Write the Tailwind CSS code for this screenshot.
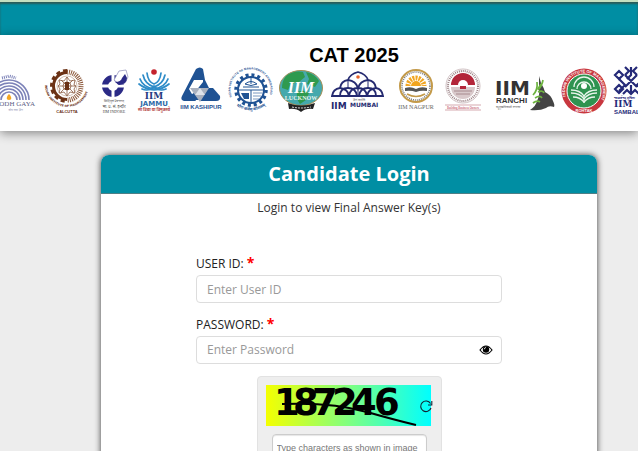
<!DOCTYPE html>
<html lang="en">
<head>
    <meta charset="UTF-8">
    <meta name="viewport" content="width=device-width, initial-scale=1.0">
    <title>CAT 2025 - Candidate Login</title>
    <script src="https://cdn.jsdelivr.net/npm/@tailwindcss/browser@4"></script>
</head>
<body class="h-screen overflow-hidden bg-[#ededed] font-['Open_Sans','Noto_Sans',sans-serif] text-xs text-[#333]">

    <!-- Top bar -->
    <div class="h-[35px] border-t-2 border-[#c4dfc0] bg-[#008ea3] shadow-[inset_0_2px_2px_#2c5c58]"></div>

    <!-- Banner with the institute logos -->
    <header class="overflow-hidden bg-white pt-2.5 pb-2.5 shadow-[0_2px_10px_rgba(0,0,0,0.45)]">
        <h1 class="pl-[70px] text-center font-['Liberation_Sans',Arial,sans-serif] text-[20px] leading-[20px] font-bold text-black">CAT 2025</h1>
        <div class="flex justify-center font-['Liberation_Sans',Arial,sans-serif]">

            <!-- IIM Bodh Gaya -->
            <svg class="h-[56px] w-[58px] shrink-0" viewBox="0 0 58 56" role="img" aria-label="IIM Bodh Gaya">
                <g fill="none" stroke="#7c82b8" stroke-width="1.6">
                    <path d="M7 35a20 20 0 0 1 40 0"/>
                    <path d="M10 35a17 17 0 0 1 34 0"/>
                    <path d="M13 35a14 14 0 0 1 28 0"/>
                    <path d="M16 35a11 11 0 0 1 22 0"/>
                    <path d="M19 35a8 8 0 0 1 16 0"/>
                    <path d="M20 13l7-2 7 2" stroke-dasharray="1 1" stroke-width="3"/>
                </g>
                <path d="M27 29c-3 3-3 6 0 6s3-3 0-6z" fill="#f5a623"/>
                <text x="53" y="41" text-anchor="end" font-size="7" fill="#5d5f86" font-family="Liberation Serif">BODH GAYA</text>
                <text x="41" y="46" text-anchor="end" font-size="3" fill="#8d8fb0" font-family="Noto Sans">बोध गया ज्ञान</text>
            </svg>

            <!-- IIM Calcutta -->
            <svg class="h-[56px] w-[54px] shrink-0" viewBox="0 0 54 56" role="img" aria-label="IIM Calcutta">
                <path id="calcutta" d="M5 20a22 22 0 0 0 44 0" fill="none"/>
                <path d="M27 7.500a13.500 13.500 0 0 0 0 27" fill="none" stroke="#6b3216" stroke-width="3"/>
                <path d="M27 5.500a15.500 15.500 0 0 0 0 31" fill="none" stroke="#6b3216" stroke-width="3" stroke-dasharray="4 3"/>
                <path d="M27 7a14 14 0 0 1 0 28" fill="none" stroke="#8d5a3c" stroke-width="5" stroke-dasharray="1 1"/>
                <circle cx="27" cy="21" r="10" fill="none" stroke="#b59680" stroke-width=".6"/>
                <g fill="none" stroke="#8a5a40" stroke-width=".8">
                    <circle cx="27" cy="21" r="4"/>
                    <path d="M27 12v18M18 21h18M21 15l12 12M33 15L21 27"/>
                    <path d="M27 12l3 4 5-1-1 5 2 1-2 3 1 4-5-1-3 4-3-4-5 1 1-4-2-3 2-2-1-4 5 1z"/>
                </g>
                <path d="M25 17h4v8h-4z" fill="#6b3216"/>
                <text font-size="3" font-weight="bold" fill="#6b3216" font-family="DejaVu Sans"><textPath href="#calcutta">INDIAN INSTITUTE OF MANAGEMENT</textPath></text>
                <text x="27" y="48" text-anchor="middle" font-size="4" font-weight="bold" fill="#6b3216">CALCUTTA</text>
            </svg>

            <!-- IIM Indore -->
            <svg class="h-[56px] w-[40px] shrink-0" viewBox="0 0 40 56" role="img" aria-label="IIM Indore">
                <circle cx="19" cy="21" r="8" fill="none" stroke="#2b2a86" stroke-width="6"/>
                <path d="M19 8v26M6 21h26" stroke="#fff" stroke-width="3"/>
                <path d="M20 15l5-9 7-1 2 7-3 6-6 1z" fill="#fff" stroke="#9a9ac0" stroke-width=".8"/>
                <path d="M21 17q6 0 7-4l3-4 2 4q0 6-8 7z" fill="#2b2a86"/>
                <text x="20" y="37" text-anchor="middle" font-size="3" fill="#444" font-family="Noto Sans">सिद्धिमूलं प्रबन्धनम्</text>
                <text x="20" y="43" text-anchor="middle" font-size="4" fill="#444" font-family="Noto Sans">भा. प्र. सं. इन्दौर</text>
                <text x="20" y="48" text-anchor="middle" font-size="4" fill="#444" font-family="Liberation Serif">IIM INDORE</text>
            </svg>

            <!-- IIM Jammu -->
            <svg class="h-[56px] w-[42px] shrink-0" viewBox="0 0 42 56" role="img" aria-label="IIM Jammu">
                <circle cx="20" cy="7" r="2.800" fill="#c4222c"/>
                <g fill="none" stroke="#2e8cc8" stroke-width="1.700" stroke-linecap="round">
                    <path d="M13 8q1 9 7 11q6-2 7-11"/>
                    <path d="M9 10q2 9 11 12q9-3 11-12"/>
                    <path d="M6 14q3 8 14 10q11-2 14-10"/>
                    <path d="M5 19q6 5 15 6q9-1 15-6"/>
                    <path d="M8 24q7 3 12-3q5 6 12 3"/>
                </g>
                <text x="20" y="34" text-anchor="middle" font-size="9" font-weight="bold" fill="#263a80" font-family="DejaVu Serif">IIM</text>
                <text x="20" y="41" text-anchor="middle" font-size="7" font-weight="bold" fill="#2d6aa8" font-family="DejaVu Sans">JAMMU</text>
                <text x="20" y="46" text-anchor="middle" font-size="4" font-weight="bold" fill="#b03a3a" font-family="Noto Sans">सा विद्या या विमुक्तये</text>
            </svg>

            <!-- IIM Kashipur -->
            <svg class="h-[56px] w-[49px] shrink-0" viewBox="0 0 49 56" role="img" aria-label="IIM Kashipur">
                <path d="M20 4q4-3 7 0v11h-9l-5 9 7 12H8q-4-1-2-5z" fill="#1f5293"/>
                <path d="M27 4l2 11 4 8-7 12H8l11-8 8-10z" fill="#1f5293"/>
                <path d="M28 23h9l7 8q1 5-4 5H24z" fill="#1f5293"/>
                <path d="M14 23h19l-9 14z" fill="#a9b1bf"/>
                <path d="M24 23l5 7H19z" fill="#dfe3ea"/>
                <text x="25" y="44" text-anchor="middle" font-size="6" font-weight="bold" fill="#1f5293">IIM KASHIPUR</text>
            </svg>

            <!-- IIM Ahmedabad -->
            <svg class="h-[56px] w-[50px] shrink-0" viewBox="0 0 50 56" role="img" aria-label="IIM Ahmedabad">
                <path id="gear-top" d="M7 32a20 20 0 1 1 37 0" fill="none"/>
                <path id="gear-bottom" d="M9 39q16 13 34 0" fill="none"/>
                <circle cx="26" cy="25" r="13" fill="none" stroke="#1f5293" stroke-width="2"/>
                <circle cx="26" cy="25" r="15" fill="none" stroke="#1f5293" stroke-width="3.500" stroke-dasharray="3 2.890"/>
                <path d="M13 25h26M26 25v14M20 19q6-5 12 0q-6 3-12 0M26 13v6M18 22h16" fill="none" stroke="#1f5293" stroke-width="1"/>
                <path d="M16 28h8v6h-5z" fill="#1f5293"/>
                <path d="M28 28h9M28 31h8M28 34h6" stroke="#7a98c0" stroke-width="1"/>
                <text font-size="3" font-weight="bold" fill="#1f5293"><textPath href="#gear-top">INDIAN INSTITUTE OF MANAGEMENT AHMEDABAD</textPath></text>
                <text font-size="4" font-weight="bold" fill="#1f5293" font-family="Noto Sans"><textPath href="#gear-bottom" startOffset="3">योगः कर्मसु कौशलम्</textPath></text>
            </svg>

            <!-- IIM Lucknow -->
            <svg class="h-[56px] w-[52px] shrink-0" viewBox="0 0 52 56" role="img" aria-label="IIM Lucknow">
                <ellipse cx="26" cy="23" rx="21.500" ry="17.500" fill="#45a9ad" stroke="#a58d52" stroke-width="1"/>
                <path d="M11 11q8-6 17-4l2 5-6 5-8 2-3 6-6-2q0-7 4-12zM31 7q9 2 13 9l-4 6-8-3 2-5zM22 27q7-3 12 1l-3 7-6 4q-4-5-3-12z" fill="#2f9a4e"/>
                <text x="26" y="28" text-anchor="middle" font-size="16" font-weight="bold" font-style="italic" fill="#fff" font-family="Liberation Serif">IIM</text>
                <text x="26" y="35" text-anchor="middle" font-size="6" font-weight="bold" fill="#e9f5ee" font-family="Liberation Serif">LUCKNOW</text>
                <path d="M13 38q13 5 27 0l-2 6q-7-1-12 3q-5-4-12-3z" fill="#222"/>
                <path d="M17 42q9 2 19 0" fill="none" stroke="#ddd" stroke-width="1" stroke-dasharray="2 1"/>
            </svg>

            <!-- IIM Mumbai -->
            <svg class="h-[56px] w-[64px] shrink-0" viewBox="0 0 64 56" role="img" aria-label="IIM Mumbai">
                <g fill="none" stroke="#252a70" stroke-width="1.800">
                    <path d="M5 31q1-7 8-8q1-7 8-8q2-6 10-8q8 2 10 8q7 1 8 8q6 1 7 8z"/>
                    <path d="M13 23q8 1 9 8q1-8 9-8q8 0 9 8q1-7 9-8"/>
                    <path d="M21 15q8 1 10 8q2-7 10-8M13 31q0-8 8-8q8 0 9 8M32 31q1-8 9-8q8 0 8 8"/>
                    <path d="M31 23v8M21 15v8M41 15v8" stroke-width="1"/>
                </g>
                <circle cx="31" cy="12" r="1.800" fill="#e8632c"/>
                <text x="32" y="36" text-anchor="middle" font-size="3" fill="#555" font-family="Noto Sans">ज्ञानं कर्मणि</text>
                <text x="4" y="44" font-size="9" font-weight="bold" fill="#252a70" font-family="DejaVu Sans">IIM</text>
                <text x="23" y="42" font-size="6" font-weight="bold" fill="#252a70" font-family="DejaVu Sans">MUMBAI</text>
            </svg>

            <!-- IIM Nagpur -->
            <svg class="h-[56px] w-[49px] shrink-0" viewBox="0 0 49 56" role="img" aria-label="IIM Nagpur">
                <circle cx="25" cy="21" r="16" fill="#fff" stroke="#c39a4a" stroke-width="2"/>
                <circle cx="25" cy="21" r="14" fill="none" stroke="#777" stroke-width="1.500" stroke-dasharray="1 1"/>
                <path d="M20 21a5 5 0 0 1 10 0z" fill="#f2a51f"/>
                <path d="M17 21a8 8 0 0 1 16 0" fill="none" stroke="#f2a51f" stroke-width="5" stroke-dasharray="2 1"/>
                <path d="M14 23q6-2 11 1q5-3 11-1v3q-6-1-11 1q-5-2-11-1z" fill="#555"/>
                <path d="M16 29q9 5 18 0" fill="none" stroke="#c39a4a" stroke-width="1.500"/>
                <text x="25" y="44" text-anchor="middle" font-size="6" fill="#666" font-family="Liberation Serif">IIM NAGPUR</text>
            </svg>

            <!-- IIM Raipur -->
            <svg class="h-[56px] w-[49px] shrink-0" viewBox="0 0 49 56" role="img" aria-label="IIM Raipur">
                <circle cx="23" cy="21" r="17" fill="none" stroke="#cfc0c2" stroke-width="1"/>
                <circle cx="23" cy="21" r="15" fill="none" stroke="#9a8084" stroke-width="2" stroke-dasharray="1 1"/>
                <path d="M11 20a12 12 0 0 1 24 0z" fill="#b3263a"/>
                <path d="M11 22a12 12 0 0 0 24 0z" fill="#d9c9cb"/>
                <path d="M18 20a5 5 0 0 1 10 0z" fill="#fff"/>
                <path d="M20 21h6v3h-6z" fill="#b3263a"/>
                <path d="M14 26h18M16 29h14" stroke="#a78a8e" stroke-width="1"/>
                <path d="M5 40h36M5 45h36" stroke="#b96f7b" stroke-width=".6"/>
                <text x="23" y="44" text-anchor="middle" font-size="3" fill="#b3263a" font-family="Liberation Serif">Building Business Owners</text>
            </svg>

            <!-- IIM Ranchi -->
            <svg class="h-[56px] w-[68px] shrink-0" viewBox="0 0 68 56" role="img" aria-label="IIM Ranchi">
                <text x="6" y="30" font-size="20" font-weight="bold" fill="#333" font-family="DejaVu Sans">IIM</text>
                <text x="7" y="38" font-size="8" font-weight="bold" fill="#333">RANCHI</text>
                <text x="7" y="43" font-size="3" fill="#555" font-family="Noto Sans">बहुमुखविकासो गन्तव्यः</text>
                <path d="M50 11l2 7q3 5 4 9q6 3 8 9q2 4 1 6q-5-2-8 1q-6 3-16 2q6-4 7-9q3-6 2-12z" fill="#444"/>
                <path d="M48 17q1 8-4 13M54 15q-1 6-5 10M52 19l-3 5M49 27q5-2 6 1M46 33q5-3 7 0M44 38q4-3 7-1" fill="none" stroke="#6db33f" stroke-width="1.700"/>
            </svg>

            <!-- IIM Rohtak -->
            <svg class="h-[56px] w-[53px] shrink-0" viewBox="0 0 53 56" role="img" aria-label="IIM Rohtak">
                <path id="rohtak-top" d="M10 35a19 19 0 1 1 34 0" fill="none"/>
                <circle cx="27" cy="26" r="22.500" fill="#c8373f"/>
                <circle cx="27" cy="26" r="17" fill="#2f9350" stroke="#fff" stroke-width="1"/>
                <g fill="none" stroke="#e9f5ec" stroke-width="1.300">
                    <path d="M17 22a10 10 0 0 1 20 0M20 24a7 7 0 0 1 14 0"/>
                    <path d="M14 25q9 0 13 6q4-6 13-6M14 28q9 0 13 6q4-6 13-6M16 32q7 0 11 5q4-5 11-5"/>
                    <path d="M27 31v7"/>
                </g>
                <circle cx="27" cy="21" r="3" fill="#fff"/>
                <text font-size="4" font-weight="bold" fill="#fff"><textPath href="#rohtak-top" startOffset="4">INDIAN INSTITUTE OF MANAGEMENT</textPath></text>
                <text x="27" y="47" text-anchor="middle" font-size="4" font-weight="bold" fill="#fff">ROHTAK</text>
            </svg>

            <!-- IIM Sambalpur -->
            <svg class="h-[56px] w-[46px] shrink-0" viewBox="0 0 46 56" role="img" aria-label="IIM Sambalpur">
                <g fill="none" stroke="#252a78" stroke-width="2.200">
                    <path d="M5 10l4-4 4 4-4 4zM15 2l4 4-4 4M21 2v8l-4 4M27 2l-4 4 4 4M31 10l4-4 4 4-4 4z"/>
                    <path d="M5 24l4-4 4 4-4 4zM9 14l6 6-6 6M15 10l12 12M27 10L15 22M33 14l-6 6 6 6M31 24l4-4 4 4-4 4z"/>
                    <path d="M13 29l4-4 4 4 4-4 4 4M21 20v8"/>
                </g>
                <text x="4" y="34" font-size="3" font-weight="bold" fill="#252a78" font-family="Noto Sans">नवसर्जनम् शुचिता</text>
                <text x="4" y="42" font-size="9" font-weight="bold" fill="#252a78" font-family="DejaVu Serif">IIM</text>
                <text x="4" y="49" font-size="6" font-weight="bold" fill="#252a78">SAMBALPUR</text>
            </svg>
        </div>
    </header>

    <!-- Login card -->
    <main class="pt-6 pr-[41px] pl-[101px]">
        <section class="rounded-t-lg bg-white shadow-[0_0_6px_rgba(0,0,0,0.75)]">
            <h2 class="rounded-t-lg border-b border-[#4f7f86] bg-[#008ea3] text-center text-[20px] leading-[38px] font-bold text-white">Candidate Login</h2>
            <p class="pt-1 text-center leading-5">Login to view Final Answer Key(s)</p>

            <form class="px-[95px] pt-[34px] pb-10">
                <label for="user-id" class="block h-[23px] leading-6 font-medium text-[#222]">USER ID: <span class="text-sm leading-4 font-bold text-[#f00]">*</span></label>
                <input id="user-id" type="text" placeholder="Enter User ID" class="block h-7 w-full rounded border border-[#ddd] bg-white px-2.5 placeholder:text-[#999]">

                <label for="password" class="mt-2.5 block h-[23px] leading-6 font-medium text-[#222]">PASSWORD: <span class="text-sm leading-4 font-bold text-[#f00]">*</span></label>
                <div class="flex h-7 items-center rounded border border-[#ddd] bg-white pr-2">
                    <input id="password" type="password" placeholder="Enter Password" class="min-w-0 flex-1 px-2.5 placeholder:text-[#999]">
                    <button type="button" aria-label="Show password">
                        <svg class="h-3 w-3.5" viewBox="0 0 14 12">
                            <path d="M1 6q6-8 12 0q-6 8-12 0z" fill="#fff" stroke="#000" stroke-width="1.200"/>
                            <circle cx="7" cy="5.500" r="3.200"/>
                            <path d="M5.300 5.300q0-1.700 1.700-1.800" fill="none" stroke="#fff" stroke-width=".8"/>
                        </svg>
                    </button>
                </div>

                <!-- Captcha -->
                <div class="mx-auto mt-3 w-[185px] rounded border border-[#e2e2e2] bg-[#eee] p-2">
                    <div class="relative w-[165px]">
                        <svg class="h-[41px] w-[165px] bg-linear-to-r/srgb from-[#f4ff00] via-[#80ff80] to-[#00ffff]" viewBox="0 0 165 41" role="img" aria-label="Captcha">
                            <text x="8 27 46 66 85 108" y="30" font-family="DejaVu Sans" font-size="37" font-weight="bold">187246</text>
                            <path d="M16 19q50-2 85 8q28 8 49 13" fill="none" stroke="#000" stroke-width="2"/>
                        </svg>
                        <button type="button" aria-label="Refresh captcha" class="absolute top-3.5 -right-0.5">
                            <svg class="h-3.5 w-3.5" viewBox="0 0 14 14" fill="none" stroke="#123" stroke-width="1.100">
                                <path d="M11.500 4.500A5.300 5.300 0 1 0 12 9"/>
                                <path d="M12.800 2v4H9"/>
                            </svg>
                        </button>
                    </div>
                    <input type="text" aria-label="Captcha text" placeholder="Type characters as shown in image" class="mx-1.5 mt-2 h-7 w-[155px] rounded border border-[#ccc] bg-white px-1 font-['Liberation_Sans',Arial,sans-serif] text-[9px] shadow-[inset_0_1px_1px_rgba(0,0,0,0.1)] placeholder:text-[#777]">
                </div>

                <button type="submit" class="mx-auto mt-4 block rounded bg-[#008ea3] px-6 py-2 font-bold text-white">Login</button>
            </form>
        </section>
    </main>
</body>
</html>
